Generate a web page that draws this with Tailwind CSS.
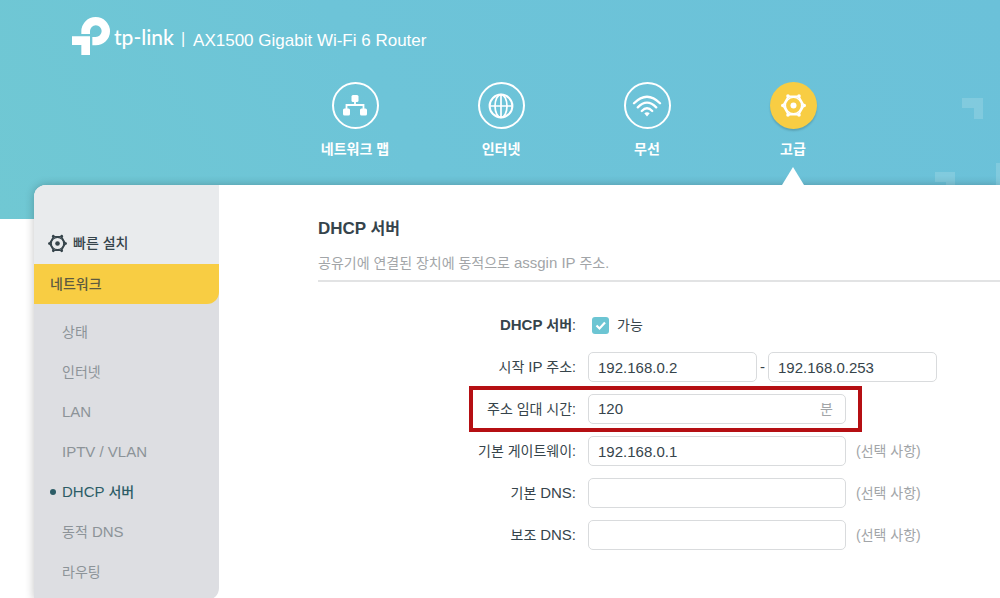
<!DOCTYPE html>
<html lang="ko">
<head>
<meta charset="utf-8">
<meta name="viewport" content="width=device-width, initial-scale=1">
<title>DHCP 서버</title>
<script src="https://cdn.jsdelivr.net/npm/@tailwindcss/browser@4"></script>
</head>
<body class="bg-white">
<svg class="hidden" aria-hidden="true">
  <symbol id="gear" viewBox="0 0 24 24">
    <path d="M7 3.500h10L21.800 12l-4.800 8.500H7L2.200 12Z" fill="none" stroke="currentColor" stroke-width="2" stroke-linejoin="round"/>
    <circle cx="12" cy="12" r="7.800" fill="none" stroke="currentColor" stroke-width="1.400"/>
    <g fill="currentColor"><circle cx="12" cy="12" r="2.900"/><circle cx="6.700" cy="2.800" r="1.700"/><circle cx="17.300" cy="2.800" r="1.700"/><circle cx="22.300" cy="12" r="1.700"/><circle cx="17.300" cy="21.200" r="1.700"/><circle cx="6.700" cy="21.200" r="1.700"/><circle cx="1.700" cy="12" r="1.700"/></g>
  </symbol>
</svg>
<div class="relative flex min-h-screen flex-col overflow-hidden bg-[linear-gradient(60deg,#70c8d3,#6dc4d8_40%,#6bc1d9)] bg-[length:100%_219px] bg-no-repeat font-['Liberation_Sans','Noto_Sans_CJK_KR',sans-serif] text-sm text-[#36444b]">
  <svg class="absolute top-[98px] right-0 h-[88px] w-[65px] text-white/15" viewBox="0 0 65 88" fill="currentColor" aria-hidden="true"><path d="M27 0h21v21h-9V10H27zM0 74h20v14H11v-4H0zM61 65h4v23h-4z"/></svg>

  <header class="relative flex h-[185px] flex-col">
    <div class="flex h-[82px] items-start pt-[17px] pl-[72px] text-white">
      <svg class="size-[38px]" viewBox="36 36 114 114" fill="currentColor" aria-hidden="true"><path d="M64 87V79A43 43 0 0 1 150 79A43 42 0 0 1 107 121H97V96H107A18 18 0 0 0 125 78A17.500 17.500 0 0 0 90 78V87ZM36 94H90V150H64V120H36Z"/></svg>
      <span class="ml-1 pt-2 font-[Lato] text-[21px] leading-6 font-medium">tp-link</span>
      <span class="ml-[7px] pt-3 text-base leading-5">|</span>
      <h1 class="ml-2 pt-3 text-[17px] leading-6">AX1500 Gigabit Wi-Fi 6 Router</h1>
    </div>
    <nav class="flex items-start pl-[282px] font-bold text-white">
      <a href="#" class="flex w-[146px] flex-col items-center">
        <span class="flex size-[47px] items-center justify-center rounded-full border-2 border-white"><svg class="size-[26px]" viewBox="0 0 26 26" fill="currentColor" aria-hidden="true"><rect x="9.500" y="2" width="7" height="7" rx="1.500"/><rect x="1" y="15.500" width="7" height="7" rx="1.500"/><rect x="18" y="15.500" width="7" height="7" rx="1.500"/><path d="M13 8v4M4.500 16v-4h17v4" fill="none" stroke="currentColor" stroke-width="1.800"/></svg></span>
        <span class="mt-2.5 leading-5">네트워크 맵</span>
      </a>
      <a href="#" class="flex w-[146px] flex-col items-center">
        <span class="flex size-[47px] items-center justify-center rounded-full border-2 border-white"><svg class="size-[26px]" viewBox="0 0 26 26" fill="none" stroke="currentColor" stroke-width="2" aria-hidden="true"><circle cx="13" cy="13" r="11.400"/><ellipse cx="13" cy="13" rx="6" ry="11.400" stroke-width="1.700"/><path d="M13 2v22M2 13h22" stroke-width="1.700"/></svg></span>
        <span class="mt-2.5 leading-5">인터넷</span>
      </a>
      <a href="#" class="flex w-[146px] flex-col items-center">
        <span class="flex size-[47px] items-center justify-center rounded-full border-2 border-white"><svg class="h-[22px] w-[30px]" viewBox="0 0 30 22" fill="none" stroke="currentColor" stroke-width="2.300" stroke-linecap="round" aria-hidden="true"><path d="M2 8.300Q15-4.700 28 8.300M5.800 12.400Q15 3 24.200 12.400M9.800 16Q15 10.500 20.200 16"/><path d="M12.300 18.200Q15 16.400 17.700 18.200L15 21.400Z" fill="currentColor" stroke="none"/></svg></span>
        <span class="mt-2.5 leading-5">무선</span>
      </a>
      <a href="#" class="flex w-[146px] flex-col items-center" aria-current="page">
        <span class="flex size-[47px] items-center justify-center rounded-full bg-[#f8cd43] shadow-[0_2px_2px_#00000028]"><svg class="size-[25px]"><use href="#gear"/></svg></span>
        <span class="mt-2.5 leading-5">고급</span>
        <svg class="relative z-10 mt-2 h-[18px] w-[22px]" viewBox="0 0 22 18" fill="white" aria-hidden="true"><path d="M11 0l11 18H0z"/></svg>
      </a>
    </nav>
  </header>

  <div class="relative ml-[34px] flex grow rounded-tl-xl bg-white shadow-[0_0_10px_#0000003d]">
    <aside class="flex w-[185px] shrink-0 flex-col overflow-hidden rounded-tl-xl rounded-br-xl bg-[#dddee2]">
      <a href="#" class="flex h-[79px] items-end gap-1.5 bg-[#e9ebed] pb-[11px] pl-3.5 leading-5 font-medium"><svg class="size-[19px]"><use href="#gear"/></svg>빠른 설치</a>
      <a href="#" class="flex h-10 items-center rounded-br-xl bg-[#f8cd43] pl-4 font-medium text-[#5d5a40]">네트워크</a>
      <ul class="pt-2 pb-2 text-[#8c9398]">
        <li><a href="#" class="flex h-10 items-center pl-7">상태</a></li>
        <li><a href="#" class="flex h-10 items-center pl-7">인터넷</a></li>
        <li><a href="#" class="flex h-10 items-center pl-7 text-[15px]">LAN</a></li>
        <li><a href="#" class="flex h-10 items-center pl-7 text-[15px]">IPTV / VLAN</a></li>
        <li><a href="#" class="flex h-10 items-center gap-1.5 pl-4 font-medium text-[#2c5c66]" aria-current="page"><span class="size-1.5 rounded-full bg-current"></span><span class="text-[15px]">DHCP <span class="text-sm">서버</span></span></a></li>
        <li><a href="#" class="flex h-10 items-center pl-7"><span class="text-[15px]"><span class="text-sm">동적</span> DNS</span></a></li>
        <li><a href="#" class="flex h-10 items-center pl-7">라우팅</a></li>
      </ul>
    </aside>

    <main class="min-w-0 grow pt-8 pl-[99px]">
      <h2 class="text-[17px] leading-6 font-bold">DHCP <span class="text-base">서버</span></h2>
      <p class="mt-3 border-b-2 border-[#e2e3e4] pb-[7px] leading-5 text-[#a2a5a8]">공유기에 연결된 장치에 동적으로 <span class="text-[15px]">assgin IP</span> 주소.</p>

      <form class="grid grid-cols-[258px_1fr] items-center gap-x-3 gap-y-3 pt-7">
        <label for="dhcp" class="text-right text-[15px] font-bold">DHCP <span class="text-sm">서버<span class="font-normal">:</span></span></label>
        <div class="flex h-[30px] items-center pl-1">
          <input id="dhcp" type="checkbox" checked class="peer size-[17px] appearance-none rounded-[3px] bg-[#cfd4d6] checked:bg-[#6cc5d3]">
          <svg class="pointer-events-none -ml-[17px] hidden size-[17px] peer-checked:block" viewBox="0 0 17 17" fill="none" stroke="white" stroke-width="2.200" aria-hidden="true"><path d="M4.500 8.500l3 3 5.500-6"/></svg>
          <label for="dhcp" class="ml-2">가능</label>
        </div>

        <label for="start" class="text-right">시작 <span class="text-[15px]">IP</span> 주소:</label>
        <div class="flex items-center text-[15px]">
          <input id="start" type="text" value="192.168.0.2" class="h-[30px] w-[169px] rounded-[5px] border border-[#d9dbdd] bg-white px-[9px]">
          <span class="w-[11px] text-center">-</span>
          <input type="text" value="192.168.0.253" aria-label="종료 IP 주소" class="h-[30px] w-[169px] rounded-[5px] border border-[#d9dbdd] bg-white px-[9px]">
        </div>

        <div class="relative col-span-2 grid grid-cols-subgrid items-center">
          <label for="lease" class="text-right">주소 임대 시간:</label>
          <div class="flex h-[30px] w-[258px] items-center rounded-[5px] border border-[#d9dbdd] bg-white pr-3 pl-[9px]">
            <input id="lease" type="text" value="120" class="min-w-0 grow text-[15px] outline-none">
            <span class="text-[#a2a5a8]">분</span>
          </div>
          <div class="pointer-events-none absolute -top-2 -bottom-2 left-[151px] w-[393px] border-4 border-[#b50f13]"></div>
        </div>

        <label for="gateway" class="text-right">기본 게이트웨이:</label>
        <div class="flex items-center gap-2.5">
          <input id="gateway" type="text" value="192.168.0.1" class="h-[30px] w-[258px] rounded-[5px] border border-[#d9dbdd] bg-white px-[9px] text-[15px]">
          <span class="text-[#a2a5a8]">(선택 사항)</span>
        </div>

        <label for="dns1" class="text-right">기본 <span class="text-[15px]">DNS:</span></label>
        <div class="flex items-center gap-2.5">
          <input id="dns1" type="text" class="h-[30px] w-[258px] rounded-[5px] border border-[#d9dbdd] bg-white px-[9px] text-[15px]">
          <span class="text-[#a2a5a8]">(선택 사항)</span>
        </div>

        <label for="dns2" class="text-right">보조 <span class="text-[15px]">DNS:</span></label>
        <div class="flex items-center gap-2.5">
          <input id="dns2" type="text" class="h-[30px] w-[258px] rounded-[5px] border border-[#d9dbdd] bg-white px-[9px] text-[15px]">
          <span class="text-[#a2a5a8]">(선택 사항)</span>
        </div>
      </form>
    </main>
  </div>
</div>
</body>
</html>
